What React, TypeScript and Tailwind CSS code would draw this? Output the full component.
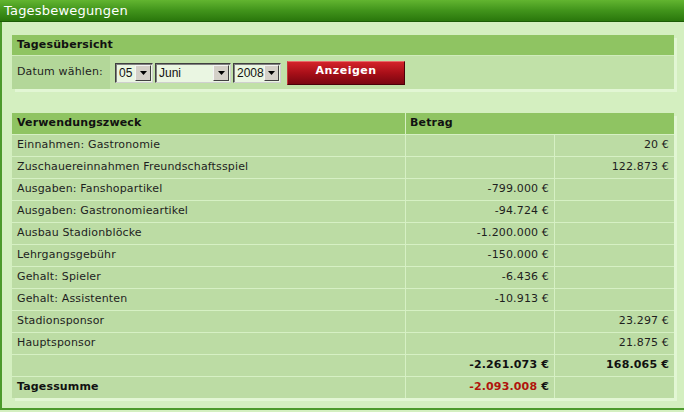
import { JSX } from 'react';

type Row = { label: string; minus?: string; plus?: string };

const rows: Row[] = [
  { label: 'Einnahmen: Gastronomie', plus: '20 €' },
  { label: 'Zuschauereinnahmen Freundschaftsspiel', plus: '122.873 €' },
  { label: 'Ausgaben: Fanshopartikel', minus: '-799.000 €' },
  { label: 'Ausgaben: Gastronomieartikel', minus: '-94.724 €' },
  { label: 'Ausbau Stadionblöcke', minus: '-1.200.000 €' },
  { label: 'Lehrgangsgebühr', minus: '-150.000 €' },
  { label: 'Gehalt: Spieler', minus: '-6.436 €' },
  { label: 'Gehalt: Assistenten', minus: '-10.913 €' },
  { label: 'Stadionsponsor', plus: '23.297 €' },
  { label: 'Hauptsponsor', plus: '21.875 €' },
];

function FakeSelect({ value, width }: { value: string; width: string }): JSX.Element {
  return (
    <div
      className={`${width} h-[20px] flex items-center justify-between bg-[#eaf6e2] border border-t-[#404040] border-l-[#404040] border-b-[#d0d0d0] border-r-[#d0d0d0] shadow-[inset_1px_1px_0_#808080]`}
    >
      <span className="pl-[3px] text-[12px] tracking-normal text-[#111] font-['Liberation_Sans',Arial,sans-serif] leading-none">
        {value}
      </span>
      <span className="w-[16px] h-[16px] mr-[1px] bg-[#d4d0c8] border border-t-[#f4f4f4] border-l-[#f4f4f4] border-b-[#404040] border-r-[#404040] flex items-center justify-center">
        <svg width="7" height="4" viewBox="0 0 7 4">
          <path d="M0 0h7L3.5 4z" fill="#000" />
        </svg>
      </span>
    </div>
  );
}

export default function App(): JSX.Element {
  return (
    <div className="w-[684px] h-[412px] overflow-hidden bg-[#d4efc0] font-['DejaVu_Sans',Verdana,sans-serif] text-[11px] tracking-[0.15px] text-[#1e1e1e]">
      {/* Titelleiste */}
      <div className="h-[22px] flex items-center pl-[4px] bg-gradient-to-b from-[#62b530] via-[#41941b] to-[#2a770c] border-b border-[#1c5c06] text-white text-[13px] tracking-[0.2px]">
        Tagesbewegungen
      </div>

      <div className="h-[388px] border-l-2 border-b-2 border-[#4c9a2c] pl-[10px] pr-[10px] pt-[13px]">
        {/* Tagesübersicht */}
        <div className="shadow-[3px_3px_0_#e2f6d4]">
          <div className="h-[20px] flex items-center pl-[5px] bg-[#8fc462] font-bold text-[#111]">
            Tagesübersicht
          </div>
          <div className="h-[34px] flex border-t border-[#d0ecbc]">
            <div className="w-[98px] flex items-center pl-[5px] bg-[#b3d799]">Datum wählen:</div>
            <div className="flex-1 flex items-center gap-[2px] pl-[5px] bg-[#c1e1a8]">
              <FakeSelect value="05" width="w-[38px]" />
              <FakeSelect value="Juni" width="w-[76px]" />
              <FakeSelect value="2008" width="w-[48px]" />
              <button className="ml-[4px] w-[118px] h-[24px] bg-gradient-to-b from-[#d4222a] via-[#a80f18] to-[#7a0610] border border-t-[#e86a6a] border-l-[#c43a3a] border-b-[#4a0008] border-r-[#4a0008] text-white font-bold text-[11px] tracking-[0.5px] pb-[2px]">
                Anzeigen
              </button>
            </div>
          </div>
        </div>

        {/* Tabelle */}
        <div className="mt-[24px] grid grid-cols-[393px_148px_119px] gap-px shadow-[3px_3px_0_#e2f6d4] bg-[#d6f0c4]">
          <div className="h-[21px] flex items-center pl-[5px] bg-[#8fc462] font-bold text-[#111]">Verwendungszweck</div>
          <div className="col-span-2 h-[21px] flex items-center pl-[4px] bg-[#8fc462] font-bold text-[#111]">Betrag</div>

          {rows.map((r) => (
            <div key={r.label} className="contents">
              <div className="h-[21px] flex items-center pl-[5px] bg-[#bcdca4]">{r.label}</div>
              <div className="h-[21px] flex items-center justify-end pr-[5px] bg-[#bcdca4]">{r.minus ?? ''}</div>
              <div className="h-[21px] flex items-center justify-end pr-[5px] bg-[#bcdca4]">{r.plus ?? ''}</div>
            </div>
          ))}

          <div className="h-[21px] bg-[#bcdca4]" />
          <div className="h-[21px] flex items-center justify-end pr-[5px] bg-[#bcdca4] font-bold text-[#111]">-2.261.073 €</div>
          <div className="h-[21px] flex items-center justify-end pr-[5px] bg-[#bcdca4] font-bold text-[#111]">168.065 €</div>

          <div className="h-[21px] flex items-center pl-[5px] bg-[#bcdca4] font-bold text-[#111]">Tagessumme</div>
          <div className="h-[21px] flex items-center justify-end pr-[5px] bg-[#bcdca4] font-bold">
            <span className="text-[#b0140c]">-2.093.008</span>
            <span className="text-[#111]">&nbsp;€</span>
          </div>
          <div className="h-[21px] bg-[#bcdca4]" />
        </div>
      </div>
    </div>
  );
}
